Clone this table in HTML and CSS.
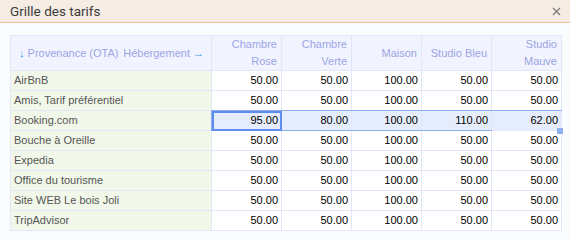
FILE: index.html
```html
<!DOCTYPE html>
<html lang="fr">
<head>
<meta charset="utf-8">
<title>Grille des tarifs</title>
<link rel="stylesheet" href="styles.css">
</head>
<body>
<div class="titlebar">
  <span class="title">Grille des tarifs</span>
  <svg class="close" width="9" height="9" viewBox="0 0 9 9"><path d="M1 1 L8 8 M8 1 L1 8" stroke="#7a7a7a" stroke-width="1.3" fill="none"/></svg>
</div>
<div class="content">
<table class="grid">
  <colgroup>
    <col class="c-first"><col class="c-num"><col class="c-num"><col class="c-num"><col class="c-num"><col class="c-num">
  </colgroup>
  <thead>
    <tr>
      <th class="corner"><div class="corner-in"><span class="lbl"><span class="arrow">↓</span> Provenance (OTA)</span><span class="lbl">Hébergement <span class="arrow">→</span></span></div></th>
      <th>Chambre<br>Rose</th>
      <th>Chambre<br>Verte</th>
      <th>Maison</th>
      <th>Studio Bleu</th>
      <th>Studio<br>Mauve</th>
    </tr>
  </thead>
  <tbody>
    <tr><td class="name">AirBnB</td><td>50.00</td><td>50.00</td><td>100.00</td><td>50.00</td><td>50.00</td></tr>
    <tr><td class="name">Amis, Tarif préférentiel</td><td>50.00</td><td>50.00</td><td>100.00</td><td>50.00</td><td>50.00</td></tr>
    <tr class="sel"><td class="name">Booking.com</td><td class="active">95.00<span class="range"></span><span class="cursor"></span></td><td>80.00</td><td>100.00</td><td>110.00</td><td class="last">62.00<span class="handle"></span></td></tr>
    <tr><td class="name">Bouche à Oreille</td><td>50.00</td><td>50.00</td><td>100.00</td><td>50.00</td><td>50.00</td></tr>
    <tr><td class="name">Expedia</td><td>50.00</td><td>50.00</td><td>100.00</td><td>50.00</td><td>50.00</td></tr>
    <tr><td class="name">Office du tourisme</td><td>50.00</td><td>50.00</td><td>100.00</td><td>50.00</td><td>50.00</td></tr>
    <tr><td class="name">Site WEB Le bois Joli</td><td>50.00</td><td>50.00</td><td>100.00</td><td>50.00</td><td>50.00</td></tr>
    <tr><td class="name">TripAdvisor</td><td>50.00</td><td>50.00</td><td>100.00</td><td>50.00</td><td>50.00</td></tr>
  </tbody>
</table>
</div>
</body>
</html>
```
FILE: styles.css
```css
html, body {
  margin: 0;
  padding: 0;
  background: #fbfcfd;
}
body {
  font-family: "Liberation Sans", Arial, sans-serif;
  width: 570px;
  height: 240px;
  overflow: hidden;
}
.titlebar {
  height: 22px;
  background: #f5ece3;
  border-bottom: 1px solid #f4c48f;
  display: flex;
  align-items: center;
  justify-content: space-between;
  padding: 0 9px 0 10px;
}
.title {
  font-family: Roboto, "Liberation Sans", sans-serif;
  font-size: 13.5px;
  color: #3c3c3c;
}
.close {
  display: block;
}
.content {
  padding: 12px 0 0 10px;
}
.grid {
  border-collapse: separate;
  border-spacing: 0;
  table-layout: fixed;
  width: 552px;
  border-top: 1px solid #e3e5f8;
  border-left: 1px solid #e3e5f8;
  font-size: 11px;
}
.c-first { width: 201px; }
.c-num { width: 70px; }
.grid th, .grid td {
  border-right: 1px solid #e3e5f8;
  border-bottom: 1px solid #e3e5f8;
  padding: 0 3px 0 3px;
  text-align: right;
  white-space: nowrap;
  overflow: visible;
}
.grid th {
  height: 34px;
  box-sizing: border-box;
  background: #f1f4fe;
  color: #9ca4e6;
  font-weight: normal;
  line-height: 17px;
  font-size: 11px;
  padding-right: 4px;
}
.grid thead tr { height: 35px; }
.grid th.corner {
  text-align: left;
  padding: 0 7px 0 8px;
}
.corner-in {
  display: flex;
  justify-content: space-between;
  align-items: center;
  width: 100%;
}
.lbl {
  display: block;
}
.arrow {
  color: #4a8fe0;
}
.grid td {
  height: 19px;
  line-height: 19px;
  color: #000;
  background: #fff;
}
.grid td.name {
  text-align: left;
  color: #555;
  background: #f1f8e9;
  padding-left: 3px;
}
.sel td:not(.name) {
  background: #e5edfc;
}
.active, .last {
  position: relative;
}
.range {
  position: absolute;
  left: -1px;
  top: -1px;
  width: 351px;
  height: 21px;
  box-sizing: border-box;
  border: 1px solid #8cadf0;
  pointer-events: none;
}
.cursor {
  position: absolute;
  left: 0;
  top: 0;
  width: 70px;
  height: 20px;
  box-sizing: border-box;
  border: 2px solid #5c8def;
  pointer-events: none;
}
.handle {
  position: absolute;
  right: -2px;
  bottom: -4px;
  width: 6px;
  height: 6px;
  background: #8fb1f2;
}
```
